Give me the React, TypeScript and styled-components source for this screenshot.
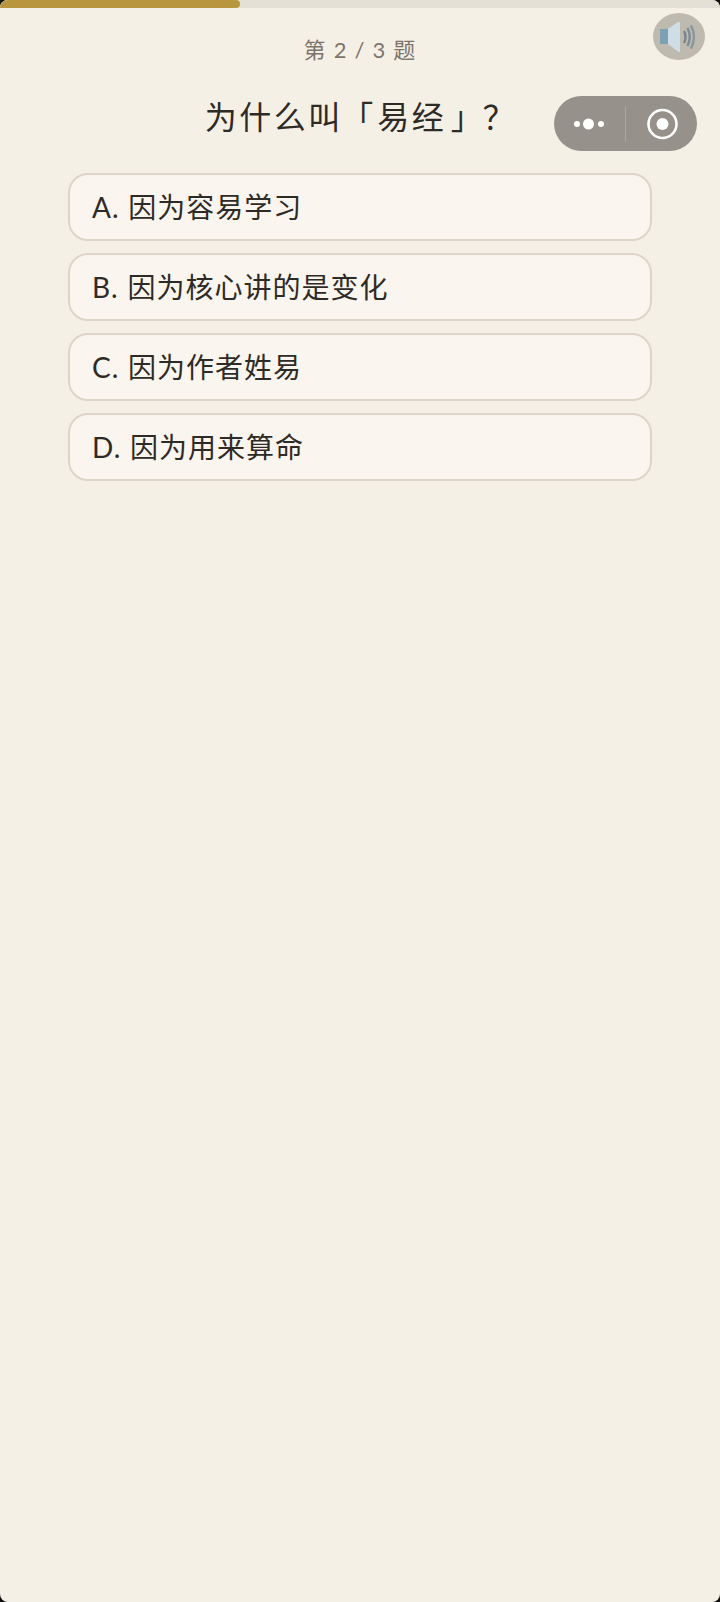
import React from 'react';
import styled, { createGlobalStyle } from 'styled-components';

const OPTIONS = ['A. 因为容易学习', 'B. 因为核心讲的是变化', 'C. 因为作者姓易', 'D. 因为用来算命'];
const FONT = `Lato, 'Noto Sans CJK SC', sans-serif`;

const GlobalStyle = createGlobalStyle`
  html, body {
    margin: 0;
    background: #111111;
  }
`;

const App = () => {
  return (
    <Page>
      <GlobalStyle />
      <ProgressTrack>
        <ProgressFill $percent={33.3} />
      </ProgressTrack>
      <Counter>第 2 / 3 题</Counter>
      <Question>
        为什么叫<Bracket $before={14} $after={2}>「</Bracket>易经<Bracket $before={5} $after={11}>」</Bracket>
        <Mark>？</Mark>
      </Question>
      <OptionList>
        {OPTIONS.map((option) => (
          <Option key={option}>{option}</Option>
        ))}
      </OptionList>

      <SoundButton>
        <svg width="38" height="32" viewBox="0 0 38 32" fill="none">
          <rect x="0" y="8" width="8" height="15" fill="#7f9fb3" />
          <path d="M8 8 L18 1 Q20 0 20 2 L20 30 Q20 32 18 30.500 L8 23 Z" fill="#cfdee6" />
          <path d="M24 10 Q27 16 24 22" stroke="#76848e" strokeWidth="2.400" />
          <path d="M27.500 7 Q32 16 27.500 25" stroke="#7f8c95" strokeWidth="2.400" />
          <path d="M31 4.500 Q37 16 31 27.500" stroke="#8a969e" strokeWidth="2.400" />
        </svg>
      </SoundButton>

      <Capsule>
        <CapsuleSide>
          <svg width="32" height="14" viewBox="0 0 32 14" fill="#ffffff">
            <circle cx="4" cy="7" r="3" />
            <circle cx="15.500" cy="7" r="5.500" />
            <circle cx="28" cy="7" r="3" />
          </svg>
        </CapsuleSide>
        <CapsuleDivider />
        <CapsuleSide>
          <svg width="32" height="32" viewBox="0 0 32 32" fill="none">
            <circle cx="16.500" cy="16" r="14" stroke="#ffffff" strokeWidth="2.600" />
            <circle cx="16.500" cy="16" r="6" fill="#ffffff" />
          </svg>
        </CapsuleSide>
      </Capsule>
    </Page>
  );
};

export default App;

const Page = styled.div`
  position: relative;
  width: 720px;
  height: 1602px;
  overflow: hidden;
  background: #f5f0e6;
  font-family: ${FONT};
  border-radius: 8px;
`;

const ProgressTrack = styled.div`
  height: 8px;
  background: #e5e0d5;
`;

const ProgressFill = styled.div<{ $percent: number }>`
  width: ${(props) => props.$percent}%;
  height: 100%;
  background: #b8963e;
  border-radius: 0 4px 4px 0;
`;

const Counter = styled.div`
  margin-top: 26px;
  height: 32px;
  font-size: 22px;
  line-height: 32px;
  letter-spacing: 1.2px;
  text-align: center;
  color: #7d746b;
`;

const Question = styled.h1`
  margin: 29px 0 0;
  padding-left: 2px;
  height: 44px;
  font-size: 32px;
  font-weight: 400;
  line-height: 44px;
  letter-spacing: 2.5px;
  text-align: center;
  color: #2e2a26;
`;

const Bracket = styled.span<{ $before: number; $after: number }>`
  margin-left: ${(props) => props.$before}px;
  margin-right: ${(props) => props.$after}px;
  font-feature-settings: 'palt';
`;

const Mark = styled.span`
  margin-left: 2px;
`;

const OptionList = styled.div`
  display: flex;
  flex-direction: column;
  gap: 11.5px;
  margin: 33.5px 68px 0;
`;

const Option = styled.div`
  box-sizing: border-box;
  height: 68.5px;
  padding: 0 22px;
  border: 2px solid #ddd5c8;
  border-radius: 20px;
  background: #faf5ef;
  font-size: 28px;
  line-height: 64.5px;
  letter-spacing: 1px;
  word-spacing: 0.5px;
  color: #2e2a26;
`;

const SoundButton = styled.div`
  position: absolute;
  top: 13px;
  left: 653px;
  display: flex;
  align-items: center;
  justify-content: center;
  width: 52px;
  height: 47px;
  border-radius: 50%;
  background: #bfbab0;
`;

const Capsule = styled.div`
  position: absolute;
  top: 96px;
  left: 554px;
  display: flex;
  align-items: center;
  width: 143px;
  height: 55px;
  border-radius: 28px;
  background: #96918a;
`;

const CapsuleSide = styled.div`
  display: flex;
  flex: 1;
  align-items: center;
  justify-content: center;
`;

const CapsuleDivider = styled.div`
  width: 1.5px;
  height: 36px;
  background: #aaa69e;
`;
